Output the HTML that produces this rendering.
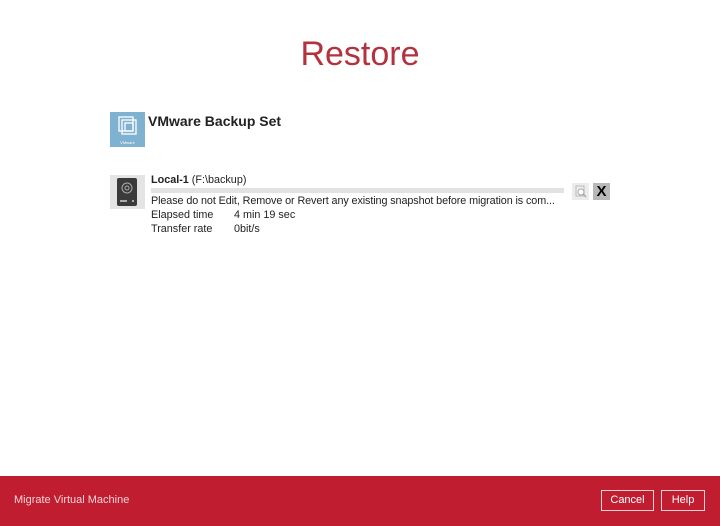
<!DOCTYPE html>
<html><head><style>
body{margin:0;width:720px;height:526px;background:#fff;font-family:"Liberation Sans",sans-serif;position:relative;overflow:hidden;color:#222}
.a{position:absolute}
.t{font-size:10.8px;white-space:nowrap}
</style></head><body>
<div class="a" style="left:0;width:720px;top:35px;text-align:center;font-size:34px;color:#b3323e;font-weight:300">Restore</div>
<div class="a" style="left:110px;top:112px;width:35px;height:35px;background:#7fb1d0">
<svg width="35" height="35"><g fill="none" stroke="#fff" stroke-width="1.3"><rect x="9" y="5" width="14" height="14"/><rect x="12" y="8" width="14" height="14"/><rect x="15" y="11" width="8" height="8"/></g><text x="17.5" y="32" font-size="4" fill="#fff" text-anchor="middle" font-family="Liberation Sans">VMware</text></svg></div>
<div class="a" style="left:148px;top:113px;font-size:14px;font-weight:bold;color:#222">VMware Backup Set</div>
<div class="a" style="left:110px;top:175px;width:35px;height:34px;background:#e4e4e4">
<div class="a" style="left:7px;top:3px;width:20px;height:28px;background:#3a3a3a;border-radius:2px"></div>
<svg class="a" style="left:7px;top:3px" width="20" height="28"><circle cx="10" cy="10" r="5" fill="none" stroke="#aaa" stroke-width="1"/><circle cx="10" cy="10" r="2" fill="none" stroke="#aaa"/><rect x="3" y="22" width="7" height="2" fill="#aaa"/><rect x="15" y="22" width="2" height="2" fill="#aaa"/></svg></div>
<div class="a t" style="left:151px;top:174px"><b>Local-1</b> (F:\backup)</div>
<div class="a" style="left:151px;top:188px;width:413px;height:5px;background:#e2e2e2"></div>
<div class="a t" style="left:151px;top:195px;letter-spacing:-0.1px">Please do not Edit, Remove or Revert any existing snapshot before migration is com...</div>
<div class="a t" style="left:151px;top:209px">Elapsed time</div><div class="a t" style="left:234px;top:209px">4 min 19 sec</div>
<div class="a t" style="left:151px;top:223px">Transfer rate</div><div class="a t" style="left:234px;top:223px">0bit/s</div>
<div class="a" style="left:572px;top:183px;width:17px;height:17px;background:#ececec"><svg width="17" height="17"><rect x="4" y="3" width="8" height="10" fill="none" stroke="#bbb"/><circle cx="9" cy="9" r="3" fill="#fff" stroke="#aaa"/><line x1="11" y1="11" x2="14" y2="14" stroke="#aaa" stroke-width="1.5"/></svg></div>
<div class="a" style="left:593px;top:183px;width:17px;height:17px;background:#b8b8b8;font-weight:bold;font-size:15px;line-height:17px;text-align:center;color:#000">X</div>
<div class="a" style="left:0;top:476px;width:720px;height:50px;background:#c01d30"></div>
<div class="a" style="left:14px;top:494px;font-size:11px;color:#f4d4d8">Migrate Virtual Machine</div>
<div class="a" style="left:601px;top:490px;width:51px;height:19px;border:1.5px solid #f2d0d4;color:#fff;font-size:11px;line-height:19px;text-align:center">Cancel</div>
<div class="a" style="left:661px;top:490px;width:42px;height:19px;border:1.5px solid #f2d0d4;color:#fff;font-size:11px;line-height:19px;text-align:center">Help</div>
</body></html>
